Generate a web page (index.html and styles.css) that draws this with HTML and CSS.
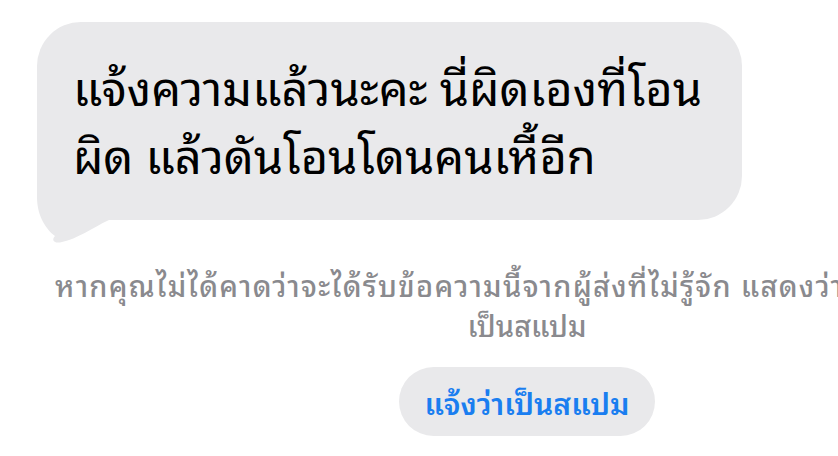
FILE: index.html
```html
<!DOCTYPE html>
<html lang="th">

<head>
    <meta charset="UTF-8">
    <meta name="viewport" content="width=device-width, initial-scale=1.0">
    <title>ข้อความ</title>
    <link rel="stylesheet" href="styles.css">
</head>

<body>
    <div id="thread">
        <div class="bubble">
            <p class="bubble-text">แจ้งความแล้วนะคะ นี่ผิดเองที่โอน<br>ผิด แล้วดันโอนโดนคนเหี้อีก</p>
            <svg class="tail" viewBox="0 0 80 80" width="80" height="80">
                <path d="M0 0 L0 25 C0 45 10 58 18 64 C14 68 17 72 25 70 C40 67 55 56 72 48 L72 0 Z" fill="#e9e9eb" />
            </svg>
        </div>

        <div class="notice">
            <p class="notice-text"><span class="notice-first">หากคุณไม่ได้คาดว่าจะได้รับข้อความนี้จากผู้ส่งที่ไม่รู้จัก แสดงว่า</span>เป็นสแปม</p>
            <div class="report-btn">แจ้งว่าเป็นสแปม</div>
        </div>
    </div>
</body>

</html>
```

FILE: styles.css
```css
* {
    margin: 0;
    padding: 0;
}

body {
    background: #fff;
    font-family: "Noto Sans Thai Looped", "Noto Sans", sans-serif;
    overflow: hidden;
    width: 838px;
    height: 456px;
}

#thread {
    padding-top: 22px;
}

.bubble {
    position: relative;
    width: 705px;
    height: 198px;
    margin-left: 37px;
    background: #e9e9eb;
    border-radius: 44px;
    box-sizing: border-box;
    padding: 29px 0 0 36px;
}

.bubble-text {
    position: relative;
    z-index: 1;
    font-size: 47px;
    line-height: 68px;
    color: #000;
    white-space: nowrap;
}

.tail {
    position: absolute;
    left: 0;
    top: 150px;
}

.notice {
    width: 944px;
    margin: 44px 0 0 55px;
    text-align: center;
}

.notice-text {
    font-size: 29px;
    font-weight: 500;
    line-height: 40px;
    color: #8a8a8e;
    white-space: nowrap;
}

.notice-first {
    display: block;
    text-align: left;
    letter-spacing: 1.3px;
}

.report-btn {
    display: inline-block;
    width: 256px;
    height: 69px;
    margin-top: 23px;
    border-radius: 35px;
    background: #e9e9eb;
    color: #1a7ef0;
    font-size: 30px;
    font-weight: 600;
    line-height: 69px;
}
```
